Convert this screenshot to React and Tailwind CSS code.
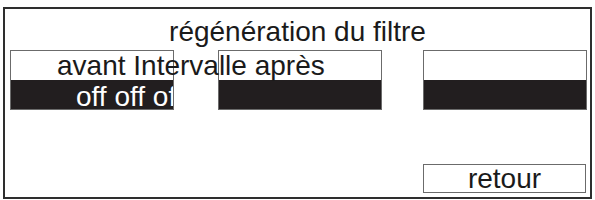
import React from "react";

const font = { fontFamily: '"Liberation Sans", Arial, sans-serif' };

function Box({ label, value, labelPad }) {
  return (
    <div className="relative h-[60px] w-[164px] shrink-0 border border-[#6b6b6b]">
      <div className="h-[29px] bg-white">
        {label && (
          <div
            className={`relative z-10 whitespace-nowrap pt-[1px] text-[28px] leading-[28px] text-[#1a1a1a] ${labelPad}`}
          >
            {label}
          </div>
        )}
      </div>
      <div className="h-[29px] overflow-hidden bg-[#221e1f]">
        {value && (
          <div className="whitespace-nowrap pl-[65px] pt-[3px] text-[28px] leading-[28px] text-white">
            {value}
          </div>
        )}
      </div>
    </div>
  );
}

export default function App() {
  return (
    <div className="h-[200px] w-[595px] bg-white pl-[3px] pt-[7px]" style={font}>
      <div className="flex h-[192px] w-[589px] flex-col border-2 border-[#2e2e2e] bg-white">
        <div className="mt-[9px] text-center text-[28px] leading-[28px] text-[#1a1a1a]">
          régénération du filtre
        </div>

        <div className="mt-[4px] flex pl-[5px]">
          <Box label="avant Intervalle après" value="off off off" labelPad="pl-[46px]" />
          <div className="ml-[44px]">
            <Box />
          </div>
          <div className="ml-[41px]">
            <Box />
          </div>
        </div>

        <div className="mb-[4px] mr-[4px] mt-auto flex justify-end">
          <button className="flex h-[29px] w-[163px] items-center justify-center border border-[#6b6b6b] bg-white text-[28px] leading-[28px] text-[#1a1a1a]">
            retour
          </button>
        </div>
      </div>
    </div>
  );
}
